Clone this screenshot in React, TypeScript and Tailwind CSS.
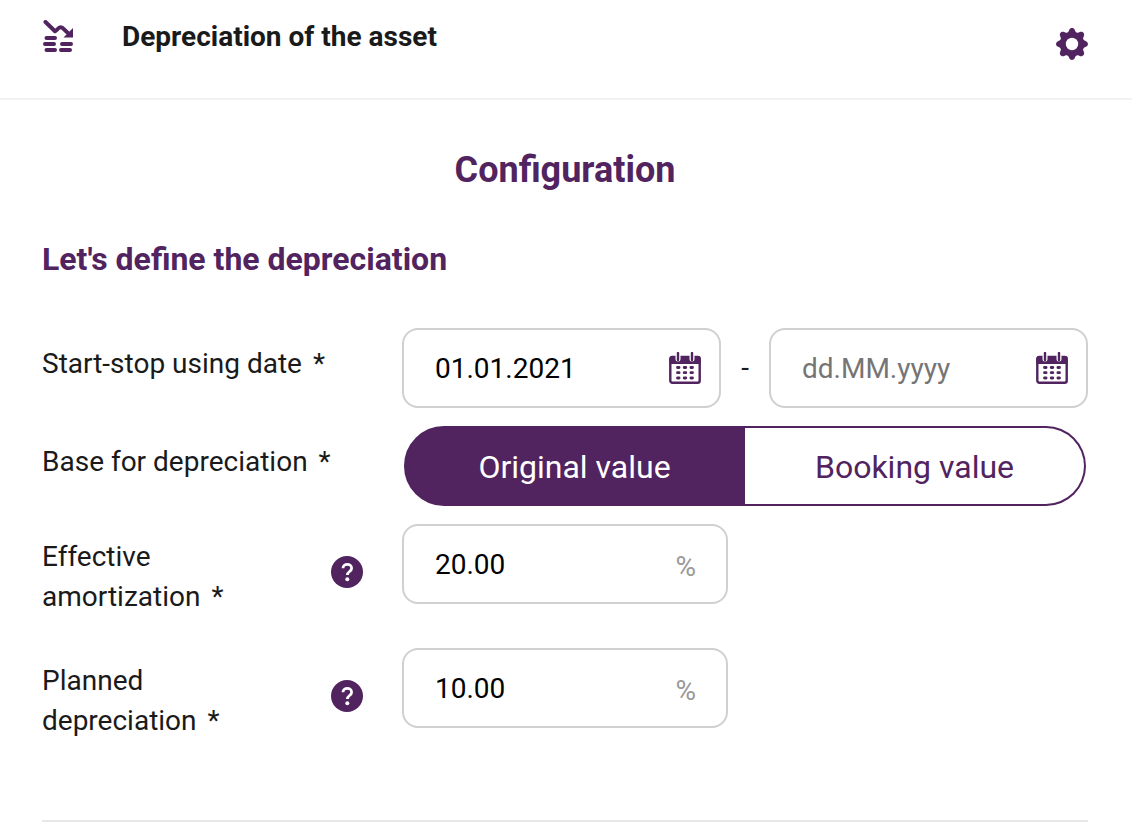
import { useState } from 'react';
import type { ReactNode } from 'react';
import clsx from 'clsx';

function DepreciationIcon() {
  return (
    <svg className="h-8 w-8" viewBox="0 0 32 32" fill="none" stroke="#51245f" strokeLinecap="round" aria-hidden="true">
      <path d="M3.500 2l9.500 9.200c2.200-.5 3-4 5.500-4 2.600 0 4 3 7.500 5.800" strokeWidth="4" strokeLinejoin="round" />
      <path d="M31 8v9.500h-9.500z" fill="#51245f" stroke="none" />
      <path d="M4.500 18h8.500M3 24h9M20 24h9M4.500 30h8.500M19 30h9" strokeWidth="4" />
    </svg>
  );
}

function GearIcon() {
  return (
    <svg className="h-8 w-8" viewBox="-16 -16 32 32" fill="#51245f" aria-hidden="true">
      <circle r="12" />
      {[0, 45, 90, 135, 180, 225, 270, 315].map((angle) => (
        <path
          key={angle}
          transform={`rotate(${angle})`}
          d="M-5.500-10.500C-3.500-12-3.400-12.500-2.800-14-1.800-16.600 1.800-16.600 2.800-14 3.400-12.500 3.500-12 5.500-10.500z"
        />
      ))}
      <circle r="6.200" fill="#fff" />
    </svg>
  );
}

function CalendarIcon() {
  return (
    <svg className="h-8 w-8" viewBox="0 0 32 32" aria-hidden="true">
      <rect x="1.300" y="5" width="29.400" height="25.700" rx="2" fill="#fff" stroke="#51245f" strokeWidth="2.400" />
      <path d="M2.500 4h27a2 2 0 0 1 2 2v6H.5V6a2 2 0 0 1 2-2z" fill="#51245f" />
      <path d="M9 0v7M23 0v7" stroke="#fff" strokeWidth="5" strokeLinecap="round" />
      <path d="M9 1v7M23 1v7" stroke="#51245f" strokeWidth="2.400" strokeLinecap="round" />
      <path
        d="M8.500 15.500h1.600M15.200 15.500h1.600M21.900 15.500h1.600M8.500 20.700h1.600M15.200 20.700h1.600M21.900 20.700h1.600M8.500 26h1.600M15.200 26h1.600M21.900 26h1.600"
        stroke="#51245f"
        strokeWidth="2.800"
        strokeLinecap="round"
      />
    </svg>
  );
}

function HelpIcon() {
  return (
    <svg className="h-8 w-8" viewBox="0 0 32 32" fill="none" aria-hidden="true">
      <circle cx="16" cy="16" r="16" fill="#51245f" />
      <path d="M12 12.200c0-5 8.600-5 8.600 0 0 3.400-4.200 3.200-4.200 6.800" stroke="#fff" strokeWidth="2.800" />
      <circle cx="16.300" cy="23.200" r="2" fill="#fff" />
    </svg>
  );
}

interface FieldProps {
  id: string;
  label: string;
  help?: boolean;
  children: ReactNode;
}

function Field({ id, label, help, children }: FieldProps) {
  return (
    <div className="grid grid-cols-[360px_minmax(0,1fr)] items-start">
      <div className={clsx('flex justify-between', help ? 'py-[13px] pr-[39px]' : 'pt-4')}>
        <label htmlFor={id} className={clsx('leading-10', help && 'w-[200px]')}>
          {label}
          <span className="ml-[11px]">*</span>
        </label>
        {help && (
          <button type="button" aria-label={`Help: ${label}`} className="mt-[19px] h-8 w-8 shrink-0">
            <HelpIcon />
          </button>
        )}
      </div>
      {children}
    </div>
  );
}

interface DateInputProps {
  id: string;
  label: string;
  defaultValue?: string;
}

function DateInput({ id, label, defaultValue }: DateInputProps) {
  return (
    <div className="flex h-20 min-w-0 flex-1 items-center rounded-2xl border-2 border-[#d0d0d0] pr-[18px] pl-[31px]">
      <input
        id={id}
        aria-label={label}
        defaultValue={defaultValue}
        placeholder="dd.MM.yyyy"
        className="h-11 w-full min-w-0 flex-1 text-black outline-none placeholder:text-[#757575]"
      />
      <button type="button" aria-label="Open calendar" className="h-8 w-8 shrink-0">
        <CalendarIcon />
      </button>
    </div>
  );
}

function PercentInput({ id, defaultValue }: { id: string; defaultValue: string }) {
  return (
    <div className="flex h-20 w-[326px] items-center rounded-2xl border-2 border-[#d0d0d0] pr-[30px] pl-[31px]">
      <input id={id} defaultValue={defaultValue} className="h-11 w-full min-w-0 flex-1 text-black outline-none" />
      <span className="pt-1.5 text-[#999]">%</span>
    </div>
  );
}

const bases = ['Original value', 'Booking value'];

export default function App() {
  const [base, setBase] = useState(bases[0]);

  return (
    <div className="bg-white font-[Roboto,sans-serif] text-[28px] text-[#1a1a1a]">
      <header className="flex items-start border-b-2 border-[#f2f2f2] pt-5 pr-11 pb-9 pl-[42px]">
        <DepreciationIcon />
        <h1 className="ml-12 flex-1 pb-2 leading-[34px] font-bold">Depreciation of the asset</h1>
        <button type="button" aria-label="Settings" className="mt-2 h-8 w-8">
          <GearIcon />
        </button>
      </header>

      <main className="pr-11 pl-[42px]">
        <h2 className="pt-12 text-center text-4xl leading-11 font-bold text-[#51245f]">Configuration</h2>
        <h3 className="pt-12 text-[32px] leading-[38px] font-bold text-[#51245f]">Let's define the depreciation</h3>

        <form className="flex flex-col gap-[18px] border-b-2 border-[#e8e8e8] pt-[50px] pb-[66px]">
          <Field id="start-date" label="Start-stop using date">
            <div className="flex items-center">
              <DateInput id="start-date" label="Start using date" defaultValue="01.01.2021" />
              <span className="w-12 text-center">-</span>
              <DateInput id="stop-date" label="Stop using date" />
            </div>
          </Field>

          <Field id="base" label="Base for depreciation">
            <div className="mx-0.5 grid h-20 grid-cols-2 text-[32px]">
              {bases.map((name) => (
                <button
                  key={name}
                  id={name === bases[0] ? 'base' : undefined}
                  type="button"
                  aria-pressed={base === name}
                  onClick={() => setBase(name)}
                  className={clsx(
                    'border-2 border-[#51245f] pt-0.5 first:rounded-l-full last:rounded-r-full last:border-l-0',
                    base === name ? 'bg-[#51245f] text-white' : 'bg-white text-[#51245f]'
                  )}
                >
                  {name}
                </button>
              ))}
            </div>
          </Field>

          <Field id="amortization" label="Effective amortization" help>
            <PercentInput id="amortization" defaultValue="20.00" />
          </Field>

          <Field id="planned" label="Planned depreciation" help>
            <PercentInput id="planned" defaultValue="10.00" />
          </Field>
        </form>
      </main>
    </div>
  );
}
